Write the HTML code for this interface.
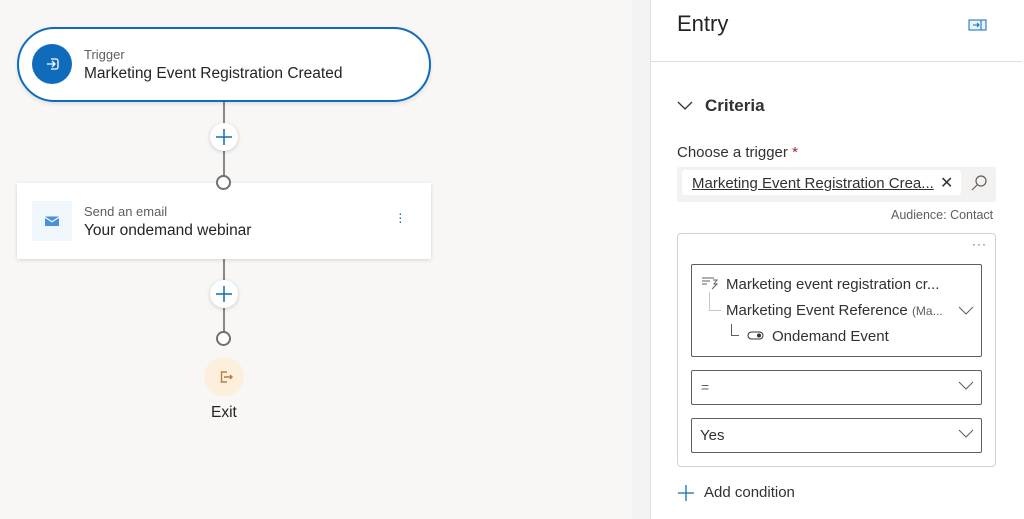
<!DOCTYPE html>
<html><head><meta charset="utf-8"><style>
*{box-sizing:border-box;margin:0;padding:0}
body{width:1024px;height:519px;overflow:hidden;font-family:"Liberation Sans",sans-serif;background:#f8f7f6;position:relative;color:#323130}
.abs{position:absolute}
.line{position:absolute;left:223px;width:2px;background:#8a8886}
.plus{position:absolute;width:28px;height:28px;border-radius:50%;background:#fff;box-shadow:0 1px 4px rgba(0,0,0,.18);left:210px;z-index:2}
.ring{position:absolute;left:216px;width:15px;height:15px;border-radius:50%;border:2px solid #707070;background:#fff;z-index:3}
.sel{position:absolute;left:691px;width:291px;border:1px solid #605e5c;border-radius:2px;background:#fff}
</style></head><body>
<div class="line" style="top:100px;height:80px"></div>
<div class="line" style="top:258px;height:76px"></div>
<div class="abs" style="left:17px;top:27px;width:414px;height:75px;border:2px solid #0f6cbd;border-radius:38px;background:#fff;box-shadow:0 2px 4px rgba(0,0,0,.1)"></div>
<div class="abs" style="left:32px;top:44px;width:40px;height:40px;border-radius:50%;background:#0f6cbd">
<svg width="40" height="40" viewBox="0 0 40 40"><path d="M15 20h8M20 17l3 3-3 3M19 15h5a2 2 0 0 1 2 2v6a2 2 0 0 1-2 2h-5" fill="none" stroke="#fff" stroke-width="1.3"/></svg></div>
<div class="abs" style="left:84px;top:47px;font-size:13px;color:#605e5c">Trigger</div>
<div class="abs" style="left:84px;top:65px;font-size:15.5px;color:#242424">Marketing Event Registration Created</div>
<div class="plus" style="top:123px"><svg width="28" height="28"><path d="M14 6v16M6 14h16" stroke="#0f6cbd" stroke-width="1.5"/></svg></div>
<div class="ring" style="top:175px"></div>
<div class="abs" style="left:17px;top:183px;width:414px;height:76px;background:#fff;box-shadow:0 1px 4px rgba(0,0,0,.15)"></div>
<div class="abs" style="left:32px;top:201px;width:40px;height:40px;background:#eff6fc">
<svg width="40" height="40"><path d="M13 17l7 4.5 7-4.5v8H13z M13 15.5h14l-7 4.5z" fill="#4a90d9"/></svg></div>
<div class="abs" style="left:84px;top:204px;font-size:13px;color:#605e5c">Send an email</div>
<div class="abs" style="left:84px;top:222px;font-size:15.5px;color:#242424">Your ondemand webinar</div>
<div class="abs" style="left:398px;top:211px;font-size:14px;color:#0f6cbd;line-height:4px">·<br>·<br>·</div>
<div class="plus" style="top:280px"><svg width="28" height="28"><path d="M14 6v16M6 14h16" stroke="#0f6cbd" stroke-width="1.5"/></svg></div>
<div class="ring" style="top:331px"></div>
<div class="abs" style="left:204px;top:357px;width:40px;height:40px;border-radius:50%;background:#fdefdd">
<svg width="40" height="40"><path d="M23 15h-5.5v10H23M20 20h8M26 18l2 2-2 2" fill="none" stroke="#c07a3a" stroke-width="1.4"/></svg></div>
<div class="abs" style="left:211px;top:404px;font-size:15.5px;color:#242424">Exit</div>

<div class="abs" style="left:632px;top:0;width:19px;height:519px;background:#f3f3f3;border-right:1px solid #e1e1e1"></div>
<div class="abs" style="left:651px;top:0;width:373px;height:519px;background:#fff"></div>
<div class="abs" style="left:651px;top:61px;width:371px;height:1px;background:#e1dfdd"></div>
<div class="abs" style="left:677px;top:11px;font-size:22px;color:#242424">Entry</div>
<svg class="abs" style="left:968px;top:19px" width="20" height="14"><rect x="1" y="1" width="17" height="10" fill="#eaf3fc" stroke="#0f6cbd"/><path d="M13 1v10M5 6h6M9 4l2 2-2 2" stroke="#0f6cbd" fill="none"/></svg>
<svg class="abs" style="left:677px;top:99px" width="16" height="12"><path d="M1 3l7 7 7-7" fill="none" stroke="#323130" stroke-width="1.3"/></svg>
<div class="abs" style="left:705px;top:96px;font-size:17px;font-weight:bold;color:#323130">Criteria</div>
<div class="abs" style="left:677px;top:144px;font-size:15px;color:#323130">Choose a trigger <span style="color:#a4262c">*</span></div>
<div class="abs" style="left:677px;top:167px;width:319px;height:35px;background:#f3f2f1;border-radius:2px"></div>
<div class="abs" style="left:682px;top:170px;width:279px;height:25px;background:#fff;border-radius:3px"></div>
<div class="abs" style="left:692px;top:175px;font-size:15px;text-decoration:underline;color:#323130">Marketing Event Registration Crea...</div>
<div class="abs" style="left:940px;top:173px;font-size:16px;color:#323130">✕</div>
<svg class="abs" style="left:970px;top:174px" width="18" height="18"><circle cx="11" cy="7" r="5" fill="none" stroke="#605e5c" stroke-width="1.2"/><path d="M7 11l-5 5" stroke="#605e5c" stroke-width="1.2"/></svg>
<div class="abs" style="left:891px;top:208px;font-size:12.5px;color:#605e5c">Audience: Contact</div>
<div class="abs" style="left:677px;top:233px;width:319px;height:234px;border:1px solid #d1d1d1;border-radius:4px"></div>
<div class="abs" style="left:972px;top:237px;font-size:12px;color:#0f6cbd;letter-spacing:1px">···</div>
<div class="sel" style="top:264px;height:93px"></div>
<svg class="abs" style="left:701px;top:276px" width="18" height="14"><path d="M1 2h12M1 5h8M1 8h5M12 4l4 0-3 4h3l-5 5" fill="none" stroke="#605e5c"/></svg>
<div class="abs" style="left:726px;top:276px;font-size:15px;color:#323130">Marketing event registration cr...</div>
<div class="abs" style="left:709px;top:292px;width:12px;height:19px;border-left:1px solid #c8c6c4;border-bottom:1px solid #c8c6c4"></div>
<div class="abs" style="left:726px;top:302px;font-size:15px;color:#323130">Marketing Event Reference <span style="font-size:12px;color:#605e5c">(Ma...</span></div>
<svg class="abs" style="left:958px;top:306px" width="16" height="10"><path d="M1 1l7 7 7-7" fill="none" stroke="#605e5c"/></svg>
<div class="abs" style="left:731px;top:324px;width:8px;height:12px;border-left:1px solid #605e5c;border-bottom:1px solid #605e5c"></div>
<svg class="abs" style="left:747px;top:331px" width="18" height="10"><rect x="1" y="1" width="15" height="7" rx="3.5" fill="none" stroke="#323130"/><circle cx="12" cy="4.5" r="2" fill="#323130"/></svg>
<div class="abs" style="left:772px;top:328px;font-size:15px;color:#323130">Ondemand Event</div>
<div class="sel" style="top:370px;height:35px"></div>
<div class="abs" style="left:701px;top:379px;font-size:14px;color:#605e5c">=</div>
<svg class="abs" style="left:958px;top:381px" width="16" height="10"><path d="M1 1l7 7 7-7" fill="none" stroke="#605e5c"/></svg>
<div class="sel" style="top:418px;height:35px"></div>
<div class="abs" style="left:700px;top:427px;font-size:15px;color:#323130">Yes</div>
<svg class="abs" style="left:958px;top:429px" width="16" height="10"><path d="M1 1l7 7 7-7" fill="none" stroke="#605e5c"/></svg>
<svg class="abs" style="left:677px;top:484px" width="18" height="18"><path d="M9 1v16M1 9h16" stroke="#0f6cbd" stroke-width="1.3"/></svg>
<div class="abs" style="left:704px;top:484px;font-size:15px;color:#323130">Add condition</div>
</body></html>
